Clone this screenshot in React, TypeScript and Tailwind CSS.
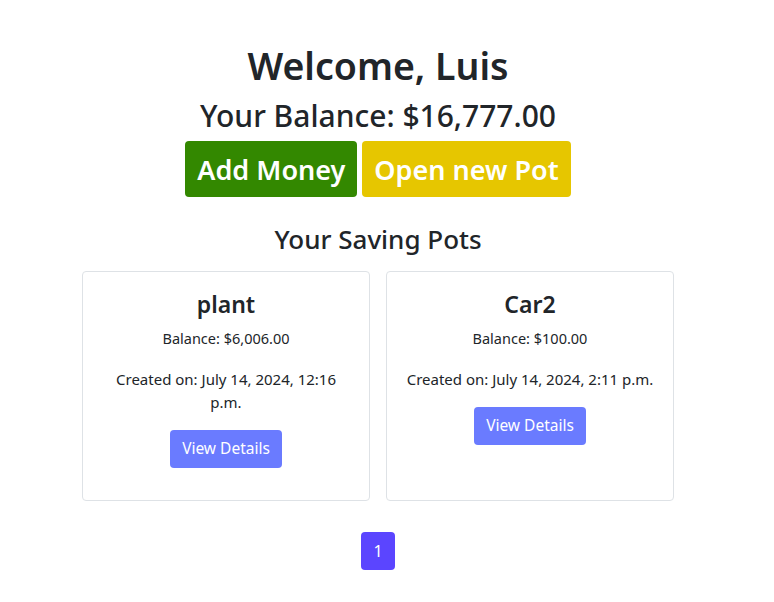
import React from "react";

const pots = [
  { name: "plant", balance: "$6,006.00", created: "July 14, 2024, 12:16 p.m." },
  { name: "Car2", balance: "$100.00", created: "July 14, 2024, 2:11 p.m." },
];

export default function App() {
  return (
    <div
      className="min-h-[602px] w-[774px] bg-white text-[#212529]"
      style={{ fontFamily: '"Noto Sans", "Open Sans", sans-serif' }}
    >
      <div className="flex w-[756px] flex-col items-center pt-[43px]">
        <h1 className="text-[37.5px] font-semibold leading-[1.2]">Welcome, Luis</h1>
        <h2 className="mt-[10px] text-[30px] font-medium leading-[1.2]">Your Balance: $16,777.00</h2>
        <div className="mt-[7px] flex gap-[5px]">
          <button className="h-[56px] rounded-[4px] bg-[#338800] px-[12px] text-[27px] font-semibold leading-none text-white">
            Add Money
          </button>
          <button className="h-[56px] rounded-[4px] bg-[#e6c600] px-[12px] text-[27px] font-semibold leading-none text-white">
            Open new Pot
          </button>
        </div>
        <h3 className="mt-[27px] text-[26px] font-medium leading-[1.2]">Your Saving Pots</h3>
        <div className="mt-[16px] grid grid-cols-[288px_288px] gap-[16px]">
          {pots.map((p) => (
            <div
              key={p.name}
              className="flex flex-col items-center rounded-[4px] border border-[#dee2e6] px-[18px] pb-[32px] pt-[19px] text-center"
            >
              <div className="text-[23px] font-semibold leading-[1.2]">{p.name}</div>
              <div className="mt-[9px] text-[14.5px] leading-[21px]">Balance: {p.balance}</div>
              <div className="mt-[19px] text-[15px] leading-[23px]">Created on: {p.created}</div>
              <button className="mt-[16px] h-[38px] rounded-[4px] bg-[#6a7bff] px-[12px] text-[15.5px] leading-none text-white">
                View Details
              </button>
            </div>
          ))}
        </div>
        <div className="mt-[31px] flex">
          <div className="flex h-[38px] w-[34px] items-center justify-center rounded-[4px] bg-[#5b45ff] text-[16px] text-white">
            1
          </div>
        </div>
      </div>
    </div>
  );
}
